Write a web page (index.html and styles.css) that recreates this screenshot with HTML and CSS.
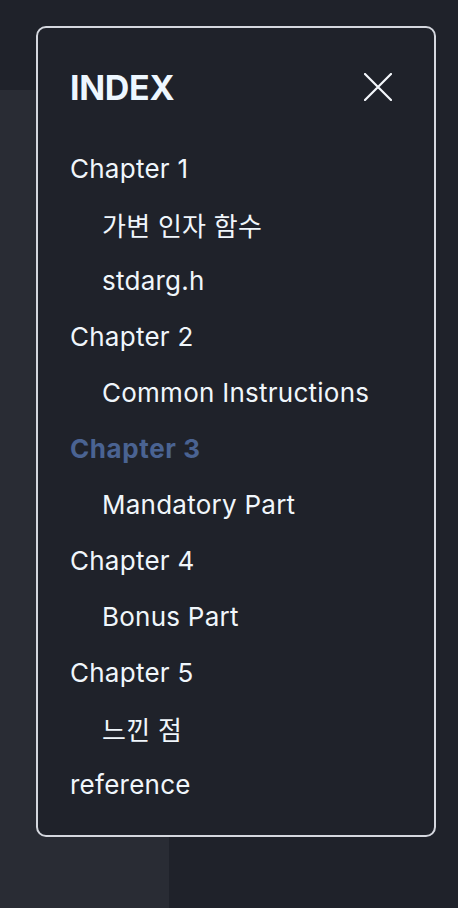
FILE: index.html
```html
<!DOCTYPE html>
<html lang="ko">
<head>
<meta charset="utf-8">
<title>Index</title>
<link rel="stylesheet" href="styles.css">
</head>
<body>
<div class="page">
  <header class="topbar"></header>
  <div class="main">
    <aside class="sidebar"></aside>
    <section class="content"></section>
  </div>
</div>
<div class="modal">
  <div class="modal-head">
    <h2 class="title">INDEX</h2>
    <button class="close" aria-label="close">
      <svg width="28" height="28" viewBox="0 0 28 28"><path d="M1 1L27 27M27 1L1 27" stroke="#f4f8fc" stroke-width="2.2" stroke-linecap="round" fill="none"/></svg>
    </button>
  </div>
  <ul class="toc">
    <li class="item">Chapter 1</li>
    <li class="item sub">가변 인자 함수</li>
    <li class="item sub">stdarg.h</li>
    <li class="item">Chapter 2</li>
    <li class="item sub">Common Instructions</li>
    <li class="item active">Chapter 3</li>
    <li class="item sub">Mandatory Part</li>
    <li class="item">Chapter 4</li>
    <li class="item sub">Bonus Part</li>
    <li class="item">Chapter 5</li>
    <li class="item sub">느낀 점</li>
    <li class="item">reference</li>
  </ul>
</div>
</body>
</html>
```

FILE: styles.css
```css
html, body {
  margin: 0;
  padding: 0;
  height: 100%;
  background: #1f222a;
  font-family: Inter, "Noto Sans CJK KR", sans-serif;
}
.page {
  display: flex;
  flex-direction: column;
  height: 908px;
}
.topbar {
  height: 90px;
  background: #1f222a;
}
.main {
  flex: 1;
  display: flex;
}
.sidebar {
  width: 169px;
  background: #292c34;
}
.content {
  flex: 1;
  background: #1f222a;
}
.modal {
  position: absolute;
  left: 36px;
  top: 26px;
  width: 396px;
  height: 807px;
  border: 2px solid #d4d7de;
  border-radius: 10px;
  background: #1f222a;
  box-sizing: content-box;
  padding: 0;
  display: flex;
  flex-direction: column;
}
.modal-head {
  display: flex;
  align-items: center;
  justify-content: space-between;
  height: 56px;
  margin: 31px 32px 25px 32px;
}
.title {
  margin: 0;
  font-size: 34px;
  font-weight: 700;
  color: #eef7ff;
  letter-spacing: -0.3px;
}
.close {
  width: 48px;
  height: 48px;
  margin-right: 0;
  padding: 0;
  border: 0;
  background: transparent;
  display: flex;
  align-items: center;
  justify-content: center;
}
.toc {
  list-style: none;
  margin: 0;
  padding: 0 32px;
}
.item {
  height: 56px;
  display: flex;
  align-items: center;
  font-size: 26px;
  letter-spacing: 0.25px;
  color: #f0f6fb;
}
.item.sub {
  padding-left: 32px;
}
.item.active {
  color: #4a6392;
  font-weight: 700;
  letter-spacing: 0.6px;
}
```
